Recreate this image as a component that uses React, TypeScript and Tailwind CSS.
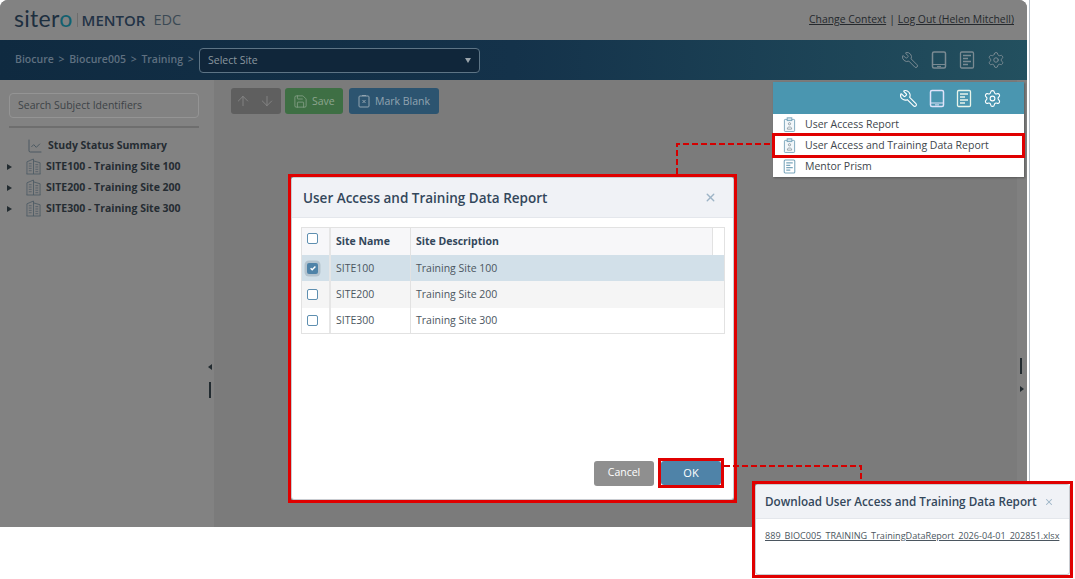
import React from 'react';
import { ArrowUp, ArrowDown, Save, Wrench, Settings, X, ChartLine } from 'lucide-react';

const font = "font-['Open_Sans',sans-serif]";

const TabletIcon = ({ className }: { className?: string }) => (
    <svg viewBox="0 0 16 18" className={className} fill="none" stroke="currentColor" strokeWidth="1.5">
        <rect x="1.5" y="1" width="13" height="16" rx="1.5" />
        <path d="M1.500 13.500h13" strokeWidth="1" />
        <path d="M6 15.400h4" strokeWidth="1" />
    </svg>
);

const DocIcon = ({ className }: { className?: string }) => (
    <svg viewBox="0 0 16 18" className={className} fill="none" stroke="currentColor" strokeWidth="1.3">
        <rect x="1.5" y="1" width="13" height="16" rx="1.2" />
        <path d="M4 4.500h8M4 7.500h5M4 10.500h8M4 13.500h5" strokeWidth="1.500" />
    </svg>
);

const BadgeIcon = () => (
    <svg viewBox="0 0 14 16" className="w-[13px] h-[15px]" fill="none" stroke="#7aa5bb" strokeWidth="1">
        <rect x="1.500" y="2.500" width="11" height="13" rx="0.800" fill="#f2f7fa" />
        <rect x="4.500" y="0.800" width="5" height="3" fill="#d3e3ec" />
        <circle cx="7" cy="7.200" r="1.200" stroke="#7a8892" strokeWidth="0.800" />
        <path d="M4.800 13v-1c0-.9.900-1.300 2.200-1.300s2.200 .4 2.200 1.300v1z" stroke="#7a8892" strokeWidth="0.800" />
    </svg>
);

const BuildingIcon = () => (
    <svg viewBox="0 0 16 18" className="w-[15px] h-[17px] text-[#4c5a64] shrink-0" fill="none" stroke="currentColor" strokeWidth="0.9">
        <path d="M1 17V4l7-3v16M8 3l7 2v12M0.500 17h15" />
        <path d="M3 6h3M3 8.500h3M3 11h3M3 13.500h3M10 7h3M10 9.500h3M10 12h3M10 14.500h3" strokeWidth="0.800" />
    </svg>
);

const Caret = () => <span className="w-0 h-0 border-y-[3.5px] border-y-transparent border-l-[5px] border-l-[#222b30]" />;

const Check = ({ checked }: { checked?: boolean }) =>
    checked ? (
        <span className="w-[11px] h-[11px] rounded-[2px] bg-[#4f83a8] flex items-center justify-center shadow-[0_0_0_2.500px_#b4c3ce]">
            <svg viewBox="0 0 10 10" className="w-2 h-2" fill="none" stroke="white" strokeWidth="1.800"><path d="M2 5.200l2 2 4-4.200" /></svg>
        </span>
    ) : (
        <span className="w-[11px] h-[11px] rounded-[2px] bg-white border border-[#5e8fb0]" />
    );

const sites = [
    { name: 'SITE100', desc: 'Training Site 100', row: 'bg-[#d2e0e9] h-[26px]', checked: true },
    { name: 'SITE200', desc: 'Training Site 200', row: 'bg-[#f5f5f5] h-[27px]' },
    { name: 'SITE300', desc: 'Training Site 300', row: 'bg-white h-[25px]' },
];

const Sidebar = () => (
    <aside className="w-[214px] shrink-0 bg-[#828282] pt-[13px] relative">
        <div className="ml-[9px] w-[190px] h-[25px] rounded-[4px] border border-[#949494] flex items-center pl-2 text-[10.5px] text-[#3d4247]">
            Search Subject Identifiers
        </div>
        <div className="ml-[9px] w-[190px] h-[2px] bg-[#6e6e6e] mt-2" />
        <div className="mt-[7px] flex flex-col text-[10.5px] font-bold text-[#252c32]">
            <div className="h-[21px] flex items-center pl-[27px] gap-[5px]">
                <ChartLine className="w-[16px] h-[16px] text-[#3f4f5a]" strokeWidth={1.200} />
                <span>Study Status Summary</span>
            </div>
            {['SITE100 - Training Site 100', 'SITE200 - Training Site 200', 'SITE300 - Training Site 300'].map((s) => (
                <div key={s} className="h-[21px] flex items-center pl-[7px]">
                    <Caret />
                    <span className="ml-[14px] mr-[5px] flex"><BuildingIcon /></span>
                    <span>{s}</span>
                </div>
            ))}
        </div>
        <span className="absolute left-[208px] top-[284px] w-0 h-0 border-y-[3px] border-y-transparent border-r-[4px] border-r-[#222b30]" />
        <span className="absolute left-[209px] top-[302px] w-[2px] h-[16px] bg-[#222b30]" />
    </aside>
);

const App: React.FC = () => {
    return (
        <div className={`${font} relative w-[1075px] h-[579px] bg-white overflow-hidden`}>
            <div className="w-[1027px] h-[527px] flex flex-col bg-[#7b7b7b] rounded-tr-[8px] rounded-tl-[8px] overflow-hidden">
                <header className="h-[40px] shrink-0 bg-[#828282] flex items-center pl-[14px] pr-[13px]">
                    <span className="font-['Lato',sans-serif] text-[23px] tracking-[0.3px] leading-none text-[#1d2f3f] -mt-1">
                        siter<span className="text-[#12606f]">o</span>
                    </span>
                    <span className="w-px h-[14px] bg-[#6d6d6d] mx-[4px]" />
                    <span className="text-[15px] font-semibold text-[#223346] leading-none">MENTOR</span>
                    <span className="text-[14.5px] text-[#3b4954] leading-none ml-[8px]">EDC</span>
                    <div className="ml-auto text-[10.4px] text-[#25292d] flex gap-[3px]">
                        <span className="underline">Change Context</span>
                        <span>|</span>
                        <span className="underline">Log Out (Helen Mitchell)</span>
                    </div>
                </header>
                <nav className="h-[40px] shrink-0 bg-gradient-to-r from-[#0f2a40] via-[#14324a] to-[#23505f] flex items-center pl-[15px] pr-[22px] text-[10.5px] font-semibold text-[#5f7080]">
                    <span className="w-[184px] whitespace-nowrap [word-spacing:2px]">Biocure &gt; Biocure005 &gt; Training &gt;</span>
                    <div className="w-[281px] h-[25px] rounded-[4px] border border-[#5d7485] bg-[#10263a] flex items-center justify-between pl-2 pr-[8px] text-[#8b979f] font-normal">
                        <span className="mt-px">Select Site</span>
                        <span className="w-0 h-0 border-x-[3.500px] border-x-transparent border-t-[5px] border-t-[#9aa4ab]" />
                    </div>
                    <div className="ml-auto flex items-center gap-[12px] text-[#7b8b93]">
                        <Wrench className="w-[18px] h-[18px] -scale-x-100" strokeWidth={1.300} />
                        <TabletIcon className="w-[16px] h-[18px]" />
                        <DocIcon className="w-[16px] h-[18px]" />
                        <Settings className="w-[18px] h-[18px]" strokeWidth={1.300} />
                    </div>
                </nav>
                <div className="flex-1 flex min-h-0">
                    <Sidebar />
                    <main className="flex-1 pl-[17px] pt-[8px] flex items-start relative text-[10.5px] text-[#9fb0b9]">
                        <div className="h-[26px] w-[50px] rounded-[3px] bg-[#5f5f5f] flex items-center gap-[8px] pl-[4px] text-[#8b8b8b]">
                            <ArrowUp className="w-[16px] h-[16px]" strokeWidth={1.200} />
                            <ArrowDown className="w-[16px] h-[16px]" strokeWidth={1.200} />
                        </div>
                        <div className="ml-[4px] h-[26px] w-[58px] rounded-[3px] bg-[#3e6f44] flex items-center pl-[8px] gap-[4px] text-[#8da58f]">
                            <Save className="w-[15px] h-[15px]" strokeWidth={1.200} />
                            <span className="mt-[2px]">Save</span>
                        </div>
                        <div className="ml-[6px] h-[26px] w-[90px] rounded-[3px] bg-[#2c5470] flex items-center pl-[9px] gap-[5px] text-[#92a4b0]">
                            <svg viewBox="0 0 12 14" className="w-[12px] h-[14px]" fill="none" stroke="currentColor" strokeWidth="1">
                                <rect x="1" y="2" width="10" height="11" rx="1" />
                                <path d="M4 1.500h4M4.500 6l3 3M7.500 6l-3 3" />
                            </svg>
                            <span className="mt-[2px]">Mark Blank</span>
                        </div>
                        <div className="absolute right-0 top-0 w-[10px] h-full bg-[#808080]" />
                        <span className="absolute left-[806px] top-[278px] w-[2px] h-[16px] bg-[#222b30]" />
                        <span className="absolute left-[806px] top-[306px] w-0 h-0 border-y-[3px] border-y-transparent border-l-[4px] border-l-[#222b30]" />
                    </main>
                </div>
            </div>
            <div className="absolute left-[1029px] top-0 w-px h-[527px] bg-[#b8c0c8]" />

            {/* report menu */}
            <div className="absolute left-[773px] top-[82px] w-[251px] shadow-[1px_1px_2px_rgba(0,0,0,0.3)] bg-white">
                <div className="h-[32px] bg-[#4a96b0] flex items-center justify-end gap-[11px] pr-[22px] text-white">
                    <Wrench className="w-[19px] h-[19px] -scale-x-100" strokeWidth={1.400} />
                    <TabletIcon className="w-[16px] h-[19px] text-[#dfe3fa]" />
                    <DocIcon className="w-[16px] h-[19px] text-[#e8f4ea]" />
                    <Settings className="w-[19px] h-[19px]" strokeWidth={1.400} />
                </div>
                <div className="text-[10.5px] text-[#40464c]">
                    <div className="h-[21px] flex items-center pl-[10px] gap-[9px]"><BadgeIcon /><span>User Access Report</span></div>
                    <div className="h-[21px] flex items-center pl-[10px] gap-[9px]"><BadgeIcon /><span>User Access and Training Data Report</span></div>
                    <div className="h-[21px] flex items-center pl-[10px] gap-[9px]"><DocIcon className="w-[13px] h-[15px] text-[#7aa5bb]" /><span>Mentor Prism</span></div>
                </div>
            </div>
            <div className="absolute left-[772px] top-[133px] w-[253px] h-[25px] border-[3px] border-[#e00000]" />

            {/* site modal */}
            <div className="absolute left-[288px] top-[174px] w-[449px] h-[329px] border-[3px] border-[#e00000]">
                <div className="h-full border border-[#c9ccd1] rounded-[3px] bg-white flex flex-col">
                    <div className="h-[40px] shrink-0 bg-[#f0f2f6] border-b border-[#e4e7ec] flex items-center justify-between pl-[11px] pr-[16px]">
                        <h2 className="text-[13.500px] font-semibold text-[#33475b] mt-px">User Access and Training Data Report</h2>
                        <X className="w-[13px] h-[13px] text-[#9db4c6]" strokeWidth={2.500} />
                    </div>
                    <div className="ml-[9px] mr-[8px] mt-[9px] border border-[#e2e2e2] text-[10.5px] text-[#4b5660]">
                        <div className="h-[27px] flex bg-[#f7f7f9] font-bold text-[#33475b]">
                            <div className="w-[29px] border-r-2 border-[#e6e6e6] flex pl-[5px] pt-[5px]"><Check /></div>
                            <div className="w-[80px] border-r border-[#e2e2e2] flex items-center pl-[5px]">Site Name</div>
                            <div className="w-[302px] border-r border-[#e2e2e2] flex items-center pl-[5px]">Site Description</div>
                            <div className="flex-1 bg-white" />
                        </div>
                        {sites.map((s) => (
                            <div key={s.name} className={`flex items-center ${s.row}`}>
                                <div className="w-[29px] h-full border-r-2 border-[#e6e6e6] flex items-center pl-[5px]"><Check checked={s.checked} /></div>
                                <div className="w-[80px] h-full border-r border-[#e2e2e2] flex items-center pl-[5px] pt-px">{s.name}</div>
                                <div className="pl-[5px] pt-px">{s.desc}</div>
                            </div>
                        ))}
                    </div>
                    <div className="mt-auto mb-[11px] flex justify-end items-center gap-[4px] pr-[9px] text-[10.5px] text-white">
                        <button className="w-[60px] h-[25px] rounded-[3px] bg-[#8f8f8f]">Cancel</button>
                        <div className="border-[3px] border-[#e00000]">
                            <button className="block w-[60px] h-[24px] rounded-[3px] bg-[#4f83a8] text-[11px]">OK</button>
                        </div>
                    </div>
                </div>
            </div>

            {/* download dialog */}
            <div className="absolute left-[752px] top-[481px] w-[321px] h-[97px] border-[3px] border-[#e00000]">
                <div className="h-full border border-[#c9ccd1] rounded-[3px] bg-white">
                    <div className="h-[34px] bg-[#f0f2f6] border-b border-[#e4e7ec] flex items-center pl-[9px] gap-[7px]">
                        <h2 className="text-[11.700px] font-semibold text-[#33475b] whitespace-nowrap">Download User Access and Training Data Report</h2>
                        <X className="w-[10px] h-[10px] text-[#9db4c6]" strokeWidth={2.500} />
                    </div>
                    <p className="pl-[9px] mt-[10px] text-[9.100px] text-[#4b5660] underline whitespace-nowrap">889_BIOC005_TRAINING_TrainingDataReport_2026-04-01_202851.xlsx</p>
                </div>
            </div>

            {/* dashed connectors */}
            <svg className="absolute left-0 top-0 w-[1075px] h-[579px] pointer-events-none" fill="none" stroke="#d40000" strokeWidth="2" strokeDasharray="6 3">
                <path d="M677 174V144H772" />
                <path d="M724 466H861V481" />
            </svg>
        </div>
    );
};

export default App;
